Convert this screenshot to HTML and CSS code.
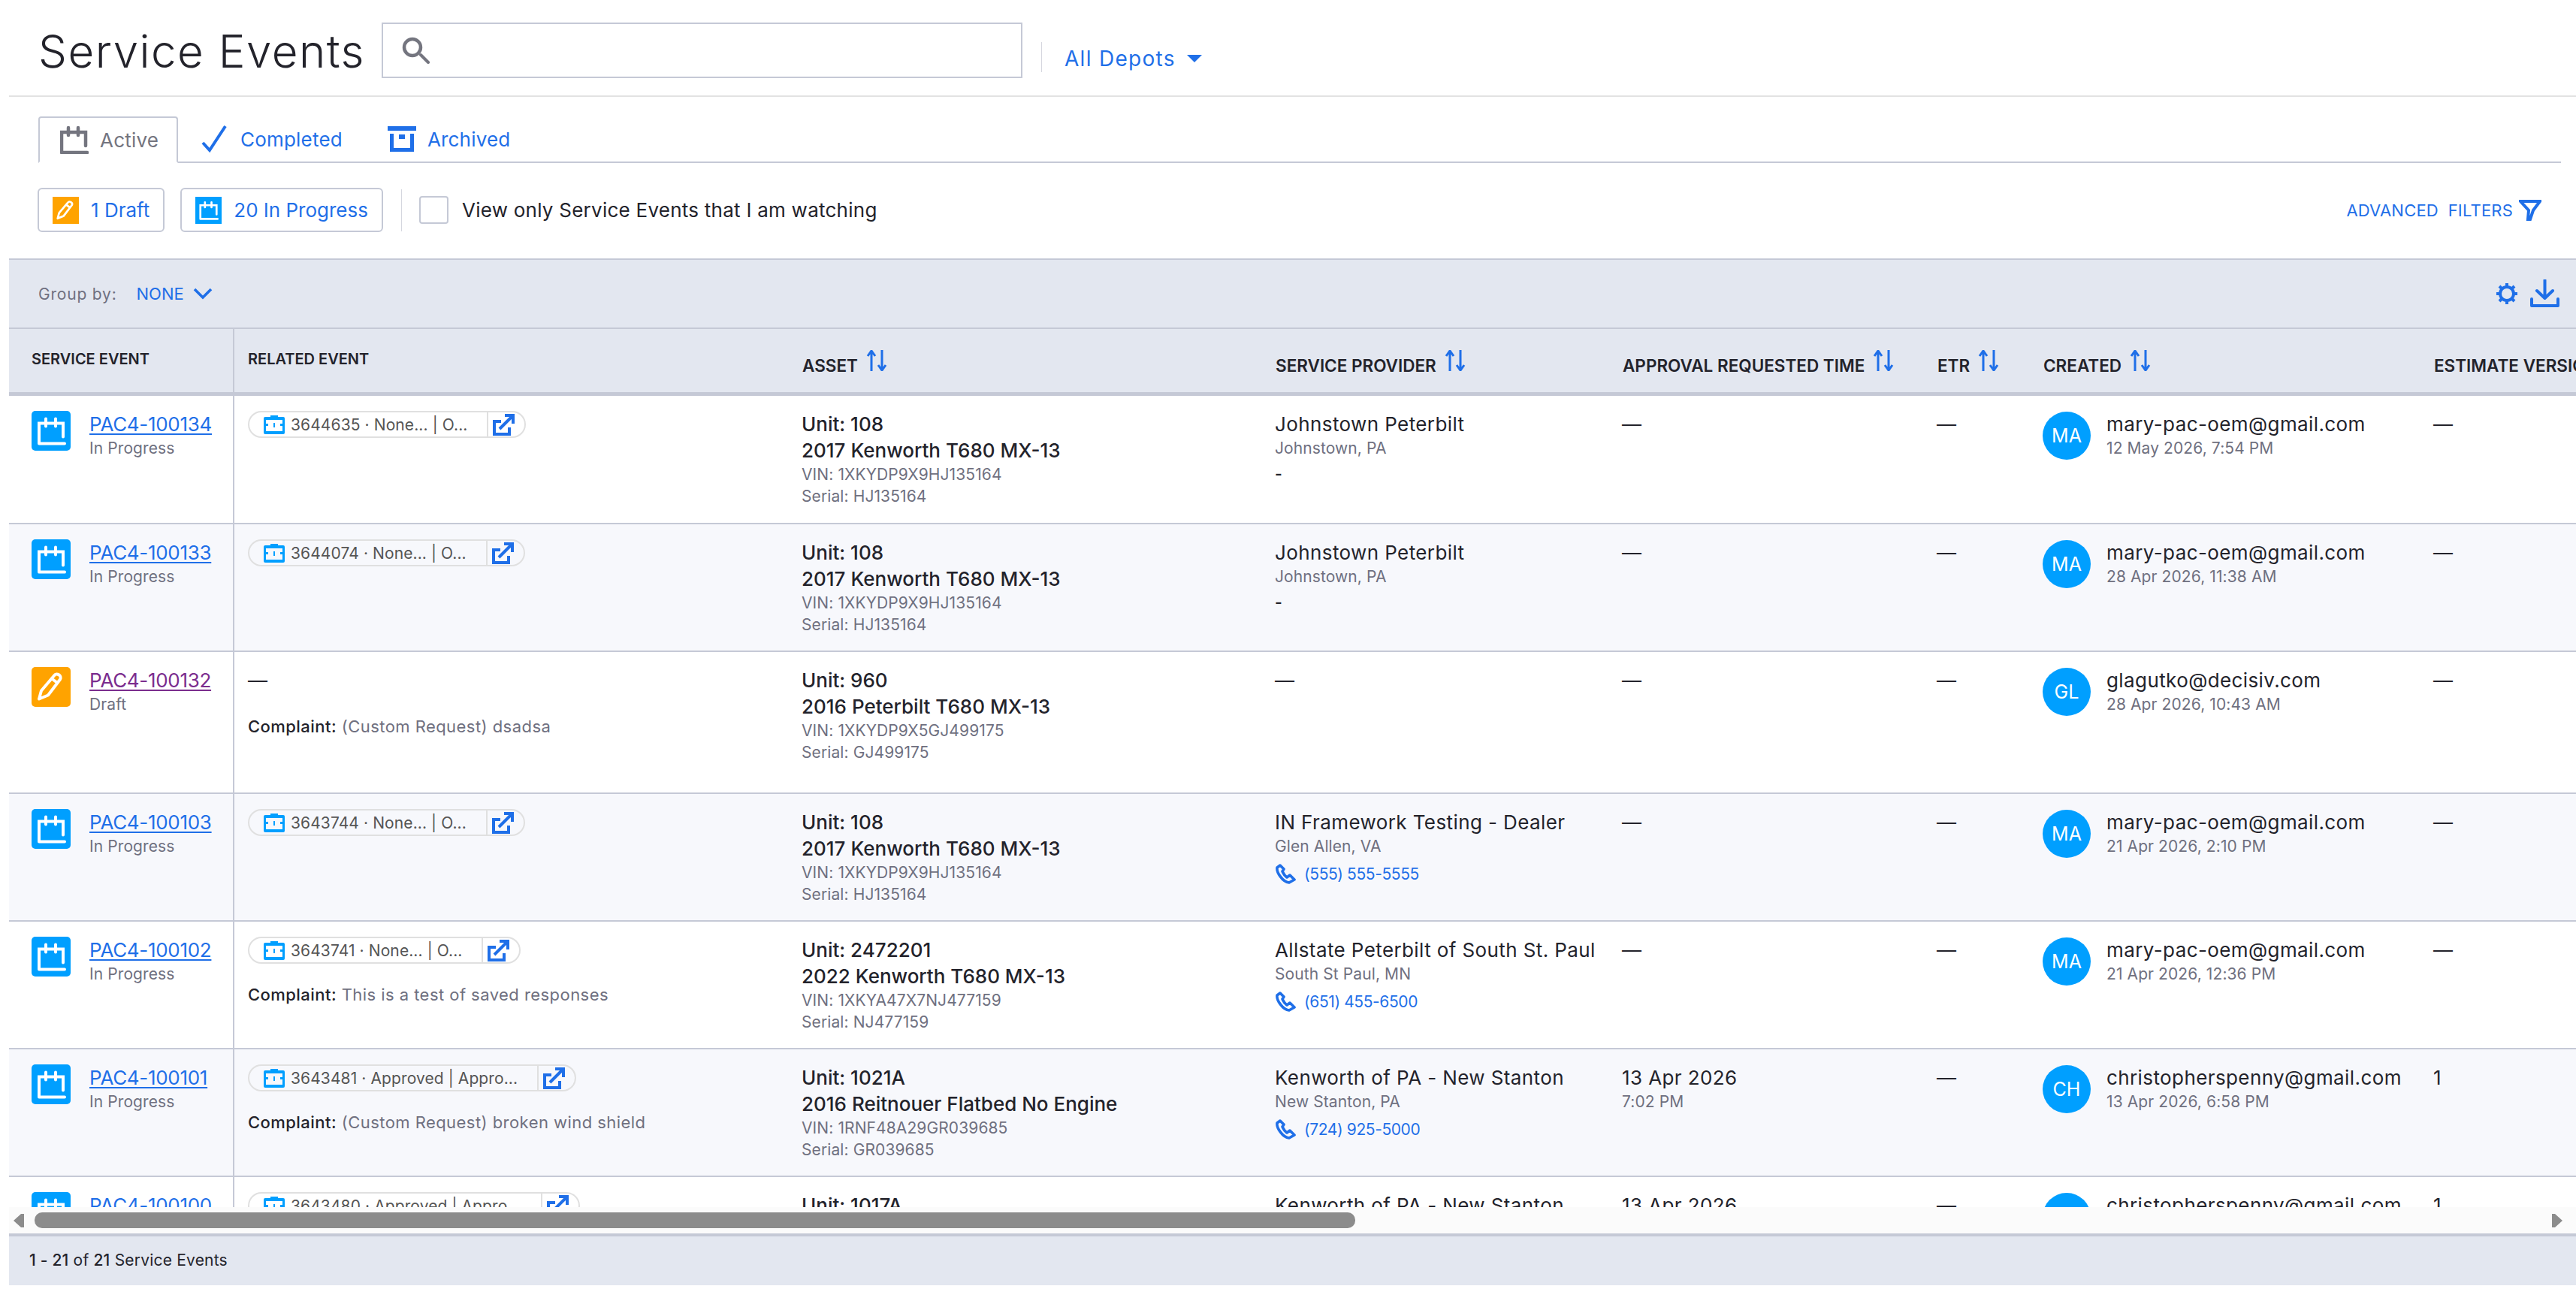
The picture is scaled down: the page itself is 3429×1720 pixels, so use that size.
FILE: index.html
```html
<!DOCTYPE html>
<html lang="en">

<head>
    <meta charset="UTF-8">
    <meta name="viewport" content="width=device-width, initial-scale=1.0">
    <title>Service Events</title>
    <link rel="stylesheet" href="styles.css">
</head>

<body>
    <svg class="sprites" width="0" height="0">
        <symbol id="i-cal" viewBox="0 0 52 52">
            <path d="M10 43V16H42V34M10 43H44M19 10V20M32 10V20" fill="none" stroke="currentColor" stroke-width="4" stroke-linecap="round" />
        </symbol>
        <symbol id="i-pencil" viewBox="0 0 52 52">
            <path d="M10 42L13 31L30 11C33 6 41 11 38 16L22 37ZM27 15L35 21" fill="none" stroke="currentColor" stroke-width="4" stroke-linejoin="round" />
        </symbol>
        <symbol id="i-ticket" viewBox="0 0 28 26">
            <path d="M2 3H9V1H19V3H26A2 2 0 0 1 28 5V24A2 2 0 0 1 26 26H2A2 2 0 0 1 0 24V5A2 2 0 0 1 2 3ZM3 7V12H6V15H3V22H25V15H22V12H25V7ZM13 11H15V17H13Z" fill="currentColor" fill-rule="evenodd" />
        </symbol>
        <symbol id="i-ext" viewBox="0 0 30 30">
            <path d="M11 11H2V28H22V19M9 21L26 4M16 3H27V14" fill="none" stroke="currentColor" stroke-width="4" />
        </symbol>
        <symbol id="i-sort" viewBox="0 0 28 28">
            <path d="M7 28V2M2 8L7 1L12 8M21 0V26M16 20L21 27L26 20" fill="none" stroke="currentColor" stroke-width="3" />
        </symbol>
        <symbol id="i-phone" viewBox="0 0 28 28">
            <path d="M7 2L3 5C2 11 10 24 19 25L26 21L20 15L16 18C12 15 11 12 10 10L12 7Z" fill="none" stroke="currentColor" stroke-width="3.6" stroke-linejoin="round" />
        </symbol>
    </svg>

    <div class="page">
        <header class="title-row">
            <h1>Service Events</h1>
            <div class="search-box">
                <svg class="search-icon" viewBox="0 0 38 36">
                    <circle cx="14" cy="14" r="11" fill="none" stroke="#74757f" stroke-width="4.5" />
                    <path d="M25 24L35 34" stroke="#74757f" stroke-width="4" stroke-linecap="round" />
                </svg>
            </div>
            <div class="depots">
                <span>All Depots</span>
                <svg class="caret" viewBox="0 0 20 10"><path d="M0 0H20L10 10Z" fill="currentColor" /></svg>
            </div>
        </header>

        <nav class="tabs">
            <a class="tab tab-active">
                <svg class="tab-icon" viewBox="8 7 38 38"><path d="M10 43V16H42V34M10 43H44M19 10V20M32 10V20" fill="none" stroke="currentColor" stroke-width="4.500" stroke-linecap="round" /></svg>
                Active
            </a>
            <a class="tab">
                <svg class="tab-icon" viewBox="0 0 38 38"><path d="M3 24L12 34L33 2" fill="none" stroke="currentColor" stroke-width="4" /></svg>
                Completed
            </a>
            <a class="tab">
                <svg class="tab-icon" viewBox="0 0 38 38"><path d="M0 2H38V8H0ZM3 12H8V31H30V12H35V36H3ZM15 13H23V19H15Z" fill="currentColor" /></svg>
                Archived
            </a>
        </nav>

        <div class="filter-row">
            <button class="count-btn">
                <svg class="count-icon draft-bg"><use href="#i-pencil" /></svg>
                1 Draft
            </button>
            <button class="count-btn">
                <svg class="count-icon progress-bg"><use href="#i-cal" /></svg>
                20 In Progress
            </button>
            <span class="filter-sep"></span>
            <span class="checkbox"></span>
            <span class="watch-label">View only Service Events that I am watching</span>
            <a class="adv-filters">
                ADVANCED&nbsp; FILTERS
                <svg class="filter-icon" viewBox="0 0 30 30"><path d="M2 3H28L19 15L15 27L12 27L13 15Z" fill="none" stroke="currentColor" stroke-width="4" /></svg>
            </a>
        </div>

        <div class="toolbar">
            <span class="group-label">Group by:</span>
            <span class="group-value">NONE</span>
            <svg class="chevron" viewBox="0 0 26 16"><path d="M2 2L13 13L24 2" fill="none" stroke="currentColor" stroke-width="3.6" /></svg>
            <svg class="gear" viewBox="0 0 28 28">
                <circle cx="14" cy="14" r="9" fill="none" stroke="currentColor" stroke-width="4" />
                <path d="M14 0V5M14 23V28M0 14H5M23 14H28M4 4L8 8M20 20L24 24M24 4L20 8M8 20L4 24" stroke="currentColor" stroke-width="4" />
            </svg>
            <svg class="download" viewBox="0 0 39 38">
                <path d="M19.500 1V24M9 15L19.500 25L30 15M2 26V35H37V26" fill="none" stroke="currentColor" stroke-width="4" stroke-linecap="round" stroke-linejoin="round" />
            </svg>
        </div>

        <div class="table-wrap">
            <table class="events">
                <colgroup>
                    <col class="c-event">
                    <col class="c-related">
                    <col class="c-asset">
                    <col class="c-provider">
                    <col class="c-approval">
                    <col class="c-etr">
                    <col class="c-created">
                    <col class="c-estimate">
                </colgroup>
                <thead>
                    <tr>
                        <th class="first">SERVICE EVENT</th>
                        <th>RELATED EVENT</th>
                        <th><div class="sortable">ASSET <svg class="sort"><use href="#i-sort" /></svg></div></th>
                        <th><div class="sortable">SERVICE PROVIDER <svg class="sort"><use href="#i-sort" /></svg></div></th>
                        <th><div class="sortable">APPROVAL REQUESTED TIME <svg class="sort"><use href="#i-sort" /></svg></div></th>
                        <th><div class="sortable">ETR <svg class="sort"><use href="#i-sort" /></svg></div></th>
                        <th><div class="sortable">CREATED <svg class="sort"><use href="#i-sort" /></svg></div></th>
                        <th><div class="sortable">ESTIMATE VERSION</div></th>
                    </tr>
                </thead>
                <tbody>
                    <tr>
                        <td class="first"><div class="event"><svg class="status-icon progress-bg"><use href="#i-cal" /></svg><div><a class="event-link">PAC4-100134</a><div class="sub">In Progress</div></div></div></td>
                        <td><div class="chip"><svg class="chip-icon"><use href="#i-ticket" /></svg><span class="chip-text">3644635 · None... | O...</span><span class="chip-ext"><svg><use href="#i-ext" /></svg></span></div></td>
                        <td><div class="main">Unit: 108</div><div class="main">2017 Kenworth T680 MX-13</div><div class="sub">VIN: 1XKYDP9X9HJ135164</div><div class="sub">Serial: HJ135164</div></td>
                        <td><div class="name">Johnstown Peterbilt</div><div class="sub">Johnstown, PA</div><div class="no-phone">-</div></td>
                        <td><div class="name">—</div></td>
                        <td><div class="name">—</div></td>
                        <td><div class="creator"><span class="avatar">MA</span><div><div class="name">mary-pac-oem@gmail.com</div><div class="sub">12 May 2026, 7:54 PM</div></div></div></td>
                        <td><div class="name">—</div></td>
                    </tr>
                    <tr class="tint">
                        <td class="first"><div class="event"><svg class="status-icon progress-bg"><use href="#i-cal" /></svg><div><a class="event-link">PAC4-100133</a><div class="sub">In Progress</div></div></div></td>
                        <td><div class="chip"><svg class="chip-icon"><use href="#i-ticket" /></svg><span class="chip-text">3644074 · None... | O...</span><span class="chip-ext"><svg><use href="#i-ext" /></svg></span></div></td>
                        <td><div class="main">Unit: 108</div><div class="main">2017 Kenworth T680 MX-13</div><div class="sub">VIN: 1XKYDP9X9HJ135164</div><div class="sub">Serial: HJ135164</div></td>
                        <td><div class="name">Johnstown Peterbilt</div><div class="sub">Johnstown, PA</div><div class="no-phone">-</div></td>
                        <td><div class="name">—</div></td>
                        <td><div class="name">—</div></td>
                        <td><div class="creator"><span class="avatar">MA</span><div><div class="name">mary-pac-oem@gmail.com</div><div class="sub">28 Apr 2026, 11:38 AM</div></div></div></td>
                        <td><div class="name">—</div></td>
                    </tr>
                    <tr class="tall">
                        <td class="first"><div class="event"><svg class="status-icon draft-bg"><use href="#i-pencil" /></svg><div><a class="event-link visited">PAC4-100132</a><div class="sub">Draft</div></div></div></td>
                        <td><div class="name dash-block">—</div><div class="complaint"><b>Complaint:</b> (Custom Request) dsadsa</div></td>
                        <td><div class="main">Unit: 960</div><div class="main">2016 Peterbilt T680 MX-13</div><div class="sub">VIN: 1XKYDP9X5GJ499175</div><div class="sub">Serial: GJ499175</div></td>
                        <td><div class="name">—</div></td>
                        <td><div class="name">—</div></td>
                        <td><div class="name">—</div></td>
                        <td><div class="creator"><span class="avatar">GL</span><div><div class="name">glagutko@decisiv.com</div><div class="sub">28 Apr 2026, 10:43 AM</div></div></div></td>
                        <td><div class="name">—</div></td>
                    </tr>
                    <tr class="tint">
                        <td class="first"><div class="event"><svg class="status-icon progress-bg"><use href="#i-cal" /></svg><div><a class="event-link">PAC4-100103</a><div class="sub">In Progress</div></div></div></td>
                        <td><div class="chip"><svg class="chip-icon"><use href="#i-ticket" /></svg><span class="chip-text">3643744 · None... | O...</span><span class="chip-ext"><svg><use href="#i-ext" /></svg></span></div></td>
                        <td><div class="main">Unit: 108</div><div class="main">2017 Kenworth T680 MX-13</div><div class="sub">VIN: 1XKYDP9X9HJ135164</div><div class="sub">Serial: HJ135164</div></td>
                        <td><div class="name">IN Framework Testing - Dealer</div><div class="sub">Glen Allen, VA</div><div class="phone"><svg><use href="#i-phone" /></svg><a>(555) 555-5555</a></div></td>
                        <td><div class="name">—</div></td>
                        <td><div class="name">—</div></td>
                        <td><div class="creator"><span class="avatar">MA</span><div><div class="name">mary-pac-oem@gmail.com</div><div class="sub">21 Apr 2026, 2:10 PM</div></div></div></td>
                        <td><div class="name">—</div></td>
                    </tr>
                    <tr>
                        <td class="first"><div class="event"><svg class="status-icon progress-bg"><use href="#i-cal" /></svg><div><a class="event-link">PAC4-100102</a><div class="sub">In Progress</div></div></div></td>
                        <td><div class="chip"><svg class="chip-icon"><use href="#i-ticket" /></svg><span class="chip-text">3643741 · None... | O...</span><span class="chip-ext"><svg><use href="#i-ext" /></svg></span></div><div class="complaint"><b>Complaint:</b> This is a test of saved responses</div></td>
                        <td><div class="main">Unit: 2472201</div><div class="main">2022 Kenworth T680 MX-13</div><div class="sub">VIN: 1XKYA47X7NJ477159</div><div class="sub">Serial: NJ477159</div></td>
                        <td><div class="name">Allstate Peterbilt of South St. Paul</div><div class="sub">South St Paul, MN</div><div class="phone"><svg><use href="#i-phone" /></svg><a>(651) 455-6500</a></div></td>
                        <td><div class="name">—</div></td>
                        <td><div class="name">—</div></td>
                        <td><div class="creator"><span class="avatar">MA</span><div><div class="name">mary-pac-oem@gmail.com</div><div class="sub">21 Apr 2026, 12:36 PM</div></div></div></td>
                        <td><div class="name">—</div></td>
                    </tr>
                    <tr class="tint">
                        <td class="first"><div class="event"><svg class="status-icon progress-bg"><use href="#i-cal" /></svg><div><a class="event-link">PAC4-100101</a><div class="sub">In Progress</div></div></div></td>
                        <td><div class="chip"><svg class="chip-icon"><use href="#i-ticket" /></svg><span class="chip-text">3643481 · Approved | Appro...</span><span class="chip-ext"><svg><use href="#i-ext" /></svg></span></div><div class="complaint"><b>Complaint:</b> (Custom Request) broken wind shield</div></td>
                        <td><div class="main">Unit: 1021A</div><div class="main">2016 Reitnouer Flatbed No Engine</div><div class="sub">VIN: 1RNF48A29GR039685</div><div class="sub">Serial: GR039685</div></td>
                        <td><div class="name">Kenworth of PA - New Stanton</div><div class="sub">New Stanton, PA</div><div class="phone"><svg><use href="#i-phone" /></svg><a>(724) 925-5000</a></div></td>
                        <td><div class="name">13 Apr 2026</div><div class="sub">7:02 PM</div></td>
                        <td><div class="name">—</div></td>
                        <td><div class="creator"><span class="avatar">CH</span><div><div class="name">christopherspenny@gmail.com</div><div class="sub">13 Apr 2026, 6:58 PM</div></div></div></td>
                        <td><div class="name">1</div></td>
                    </tr>
                    <tr>
                        <td class="first"><div class="event"><svg class="status-icon progress-bg"><use href="#i-cal" /></svg><div><a class="event-link">PAC4-100100</a><div class="sub">In Progress</div></div></div></td>
                        <td><div class="chip"><svg class="chip-icon"><use href="#i-ticket" /></svg><span class="chip-text">3643480 · Approved | Appro...</span><span class="chip-ext"><svg><use href="#i-ext" /></svg></span></div></td>
                        <td><div class="main">Unit: 1017A</div></td>
                        <td><div class="name">Kenworth of PA - New Stanton</div></td>
                        <td><div class="name">13 Apr 2026</div></td>
                        <td><div class="name">—</div></td>
                        <td><div class="creator"><span class="avatar">CH</span><div><div class="name">christopherspenny@gmail.com</div></div></div></td>
                        <td><div class="name">1</div></td>
                    </tr>
                </tbody>
            </table>
        </div>

        <div class="scrollbar">
            <svg class="scroll-arrow" viewBox="0 0 14 18"><path d="M14 0V18H10L0 9L10 0Z" fill="#8c8c8c" /></svg>
            <span class="scroll-thumb"></span>
            <svg class="scroll-arrow scroll-right" viewBox="0 0 14 18"><path d="M0 0V18H4L14 9L4 0Z" fill="#8c8c8c" /></svg>
        </div>

        <footer class="table-footer"><b>1 - 21</b> of <b>21</b> Service Events</footer>
    </div>
</body>

</html>
```

FILE: styles.css
```css
body {
    margin: 0;
    padding: 0;
    background: #fff;
    color: #23232b;
    font-family: "Inter", "Noto Sans", sans-serif;
    font-size: 26px;
    overflow: hidden;
}

.sprites {
    position: absolute;
}

.page {
    padding-left: 12px;
    height: 1720px;
    box-sizing: border-box;
}

/* title row */
.title-row {
    display: flex;
    align-items: flex-start;
    height: 127px;
    box-sizing: content-box;
    border-bottom: 2px solid #e2e2e2;
}

.title-row h1 {
    margin: 31px 0 0 39px;
    width: 457px;
    height: 73px;
    font-size: 60px;
    font-weight: 300;
    line-height: 74px;
    letter-spacing: 1.5px;
    white-space: nowrap;
}

.search-box {
    margin-top: 30px;
    width: 853px;
    height: 74px;
    box-sizing: border-box;
    border: 2px solid #c5c9d6;
    display: flex;
    align-items: center;
    padding-left: 25px;
}

.search-icon {
    width: 38px;
    height: 36px;
}

.depots {
    margin: 56px 0 0 25px;
    height: 40px;
    padding-left: 30px;
    border-left: 1px solid #d5d7df;
    display: flex;
    align-items: center;
    gap: 15px;
    color: #1f6fe8;
    font-size: 28px;
    letter-spacing: 1.3px;
    padding-top: 4px;
    box-sizing: border-box;
}

.caret {
    width: 20px;
    height: 10px;
}

/* tabs */
.tabs {
    display: flex;
    margin: 26px 20px 0 39px;
    height: 60px;
    border-bottom: 2px solid #c5c9d6;
}

.tab {
    display: flex;
    align-items: center;
    gap: 15px;
    padding: 0 30px;
    color: #1f6fe8;
    font-size: 26px;
    letter-spacing: .2px;
}

.tab-active {
    height: 62px;
    width: 186px;
    padding: 0 0 0 27px;
    box-sizing: border-box;
    border: 2px solid #c5c9d6;
    border-bottom: 2px solid #fff;
    border-radius: 4px 4px 0 0;
    background: #fff;
    color: #74757f;
}

.tab-icon {
    width: 38px;
    height: 38px;
    flex: none;
}

/* filters */
.filter-row {
    display: flex;
    align-items: center;
    height: 59px;
    margin: 33px 46px 35px 38px;
}

.count-btn {
    display: flex;
    align-items: center;
    gap: 16px;
    height: 59px;
    padding: 0 18px;
    margin-right: 21px;
    background: #fff;
    border: 2px solid #c5c9d6;
    border-radius: 6px;
    color: #1f6fe8;
    font: 400 26px "Inter", "Noto Sans", sans-serif;
}

.count-icon {
    width: 35px;
    height: 36px;
    color: #fff;
}

.draft-bg {
    background: #ffa300;
    color: #fff;
}

.progress-bg {
    background: #009fff;
    color: #fff;
}

.filter-sep {
    width: 1px;
    height: 56px;
    background: #d5d7df;
    margin: 0 23px 0 3px;
}

.checkbox {
    width: 39px;
    height: 37px;
    box-sizing: border-box;
    border: 2px solid #c5c9d6;
    border-radius: 4px;
    margin-right: 18px;
}

.watch-label {
    font-size: 26px;
    letter-spacing: .25px;
}

.adv-filters {
    margin-left: auto;
    display: flex;
    align-items: center;
    gap: 8px;
    color: #1f6fe8;
    font-size: 22px;
    letter-spacing: .2px;
    white-space: pre;
}

.filter-icon {
    width: 30px;
    height: 30px;
}

/* group by bar */
.toolbar {
    display: flex;
    align-items: center;
    height: 94px;
    box-sizing: border-box;
    border-top: 2px solid #c5c9d6;
    border-bottom: 2px solid #c5c9d6;
    background: #e3e7f0;
    padding: 0 22px 0 39px;
    color: #1f6fe8;
}

.group-label {
    color: #6f7080;
    font-size: 21px;
    letter-spacing: .8px;
    margin-right: 26px;
}

.group-value {
    font-size: 22px;
    margin-right: 12px;
}

.chevron {
    width: 26px;
    height: 16px;
}

.gear {
    width: 28px;
    height: 28px;
    margin-left: auto;
}

.download {
    width: 39px;
    height: 38px;
    margin-left: 17px;
}

/* table */
.table-wrap {
    height: 1169px;
    overflow: hidden;
}

.events {
    width: 3509px;
    table-layout: fixed;
    border-collapse: separate;
    border-spacing: 0;
}

.c-event { width: 300px; }
.c-related { width: 737px; }
.c-asset { width: 630px; }
.c-provider { width: 462px; }
.c-approval { width: 419px; }
.c-etr { width: 141px; }
.c-created { width: 520px; }
.c-estimate { width: 300px; }

.events th {
    height: 89px;
    box-sizing: border-box;
    background: #e3e7f0;
    border-bottom: 5px solid #c5c9d6;
    padding: 28px 0 0 18px;
    vertical-align: top;
    text-align: left;
    font-size: 20px;
    font-weight: 600;
    line-height: 24px;
    white-space: nowrap;
}

.sortable {
    display: flex;
    align-items: flex-end;
    gap: 11px;
    padding-left: 1px;
    font-size: 22.5px;
    line-height: 14px;
    height: 28px;
}

.sort {
    width: 28px;
    height: 28px;
    color: #1f6fe8;
}

.events td {
    height: 170px;
    box-sizing: border-box;
    border-bottom: 2px solid #c5c9d6;
    padding: 20px 0 0 18px;
    vertical-align: top;
}

.events tbody tr:first-child td {
    height: 171px;
}

.events .tall td {
    height: 189px;
}

.tint td {
    background: #f7f8fc;
}

.events .first {
    padding-left: 30px;
    border-right: 2px solid #c5c9d6;
}

.event {
    display: flex;
    gap: 25px;
}

.status-icon {
    width: 52px;
    height: 53px;
    border-radius: 5px;
    flex: none;
}

.event-link {
    display: block;
    line-height: 35px;
    color: #1f6fe8;
    font-size: 26px;
    letter-spacing: -.3px;
    text-decoration: underline;
    text-underline-offset: 3px;
}

.visited {
    color: #7b2d8e;
}

.main {
    font-size: 26px;
    font-weight: 500;
    line-height: 35px;
    white-space: nowrap;
}

.name {
    font-size: 26px;
    letter-spacing: .4px;
    line-height: 35px;
    white-space: nowrap;
}

.sub {
    color: #6f7080;
    font-size: 21px;
    letter-spacing: .1px;
    line-height: 29px;
    white-space: nowrap;
}

.no-phone {
    height: 39px;
    line-height: 39px;
    font-size: 21px;
    font-weight: 600;
}

.phone {
    display: flex;
    align-items: center;
    gap: 11px;
    height: 45px;
    font-size: 21px;
    letter-spacing: -.4px;
    color: #1f6fe8;
}

.phone svg {
    width: 28px;
    height: 28px;
}

.chip {
    display: inline-flex;
    align-items: center;
    height: 36px;
    box-sizing: border-box;
    border: 2px solid #e0e0e0;
    border-radius: 18px;
    padding-left: 19px;
}

.chip-icon {
    width: 28px;
    height: 26px;
    color: #009fff;
    flex: none;
}

.chip-text {
    margin: 0 26px 0 8px;
    color: #555;
    font-size: 21px;
    letter-spacing: .1px;
    white-space: nowrap;
}

.chip-ext {
    display: flex;
    align-items: center;
    height: 32px;
    padding: 0 12px 0 6px;
    border-left: 2px solid #e0e0e0;
    color: #1f6fe8;
}

.chip-ext svg {
    width: 30px;
    height: 30px;
}

.complaint {
    margin-top: 25px;
    line-height: 30px;
    color: #6f7080;
    font-size: 22px;
    letter-spacing: .45px;
    white-space: nowrap;
}

.complaint b {
    color: #23232b;
    font-weight: 500;
}

.dash-block {
    height: 39px;
}

.creator {
    display: flex;
    gap: 21px;
}

.avatar {
    display: flex;
    align-items: center;
    justify-content: center;
    width: 64px;
    height: 64px;
    margin-top: 1px;
    border-radius: 50%;
    background: #009fff;
    color: #fff;
    font-size: 25px;
    flex: none;
}

/* scrollbar + footer */
.scrollbar {
    display: flex;
    align-items: center;
    height: 35px;
    background: #fbfbfb;
    padding: 0 18px 0 6px;
}

.scroll-arrow {
    width: 14px;
    height: 18px;
    flex: none;
}

.scroll-thumb {
    width: 1758px;
    height: 21px;
    margin-left: 14px;
    border-radius: 10px;
    background: #8c8c8c;
}

.scroll-right {
    margin-left: auto;
}

.table-footer {
    height: 69px;
    box-sizing: border-box;
    border-top: 4px solid #c5c9d6;
    background: #e3e7f0;
    padding: 17px 0 0 27px;
    font-size: 21px;
    letter-spacing: .2px;
    line-height: 30px;
}

.table-footer b {
    font-weight: 500;
}
```
